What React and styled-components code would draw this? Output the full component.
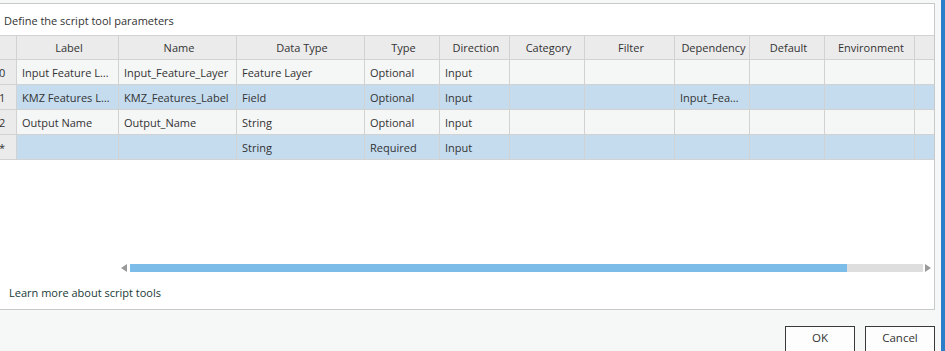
import React from "react";
import styled, { createGlobalStyle } from "styled-components";

const Global = createGlobalStyle`
  html, body { margin: 0; padding: 0; }
  body {
    width: 945px; height: 351px; overflow: hidden;
    font-family: "Open Sans", "Noto Sans", "Liberation Sans", sans-serif;
    font-size: 11px; color: #333;
    background: #f6f7f7;
  }
`;

const Window = styled.div`
  display: flex;
  width: 945px;
  height: 351px;
  overflow: hidden;
  background: #f6f7f7;
`;

const Main = styled.div`
  flex: 1;
  display: flex;
  flex-direction: column;
  padding-top: 3px;
  min-width: 0;
`;

const Edge = styled.div`
  width: 4px;
  background: #2b7ec7;
`;

const Panel = styled.div`
  flex-shrink: 0;
  height: 305px;
  margin-left: -6px;
  margin-right: 6px;
  border: 1px solid #c9c9c9;
  background: #fff;
  display: flex;
  flex-direction: column;
`;

const Title = styled.div`
  height: 31px;
  line-height: 33px;
  padding-left: 9px;
  white-space: nowrap;
`;

const Grid = styled.div`
  display: grid;
  grid-template-columns: 22px 102px 118px 128px 75px 70px 75px 90px 75px 75px 90px 1fr;
  border-top: 1px solid #d2d2d2;
`;

const Cell = styled.div`
  height: ${(p) => (p.$head ? 23 : 24)}px;
  line-height: ${(p) => (p.$head ? 23 : 25)}px;
  border-bottom: 1px solid #d2d2d2;
  border-right: ${(p) => (p.$last ? "none" : "1px solid #d2d2d2")};
  background: ${(p) =>
    p.$head || p.$rowhead ? "#ebebeb" : p.$sel ? "#c5dcef" : "#f5f6f6"};
  text-align: ${(p) => (p.$head ? "center" : "left")};
  padding-left: ${(p) => (p.$rowhead ? 4 : 5)}px;
  padding-right: ${(p) => (p.$head ? 2 : 7)}px;
  white-space: nowrap;
  overflow: hidden;
  text-overflow: ellipsis;
`;

const Spacer = styled.div`
  flex: 1;
`;

const ScrollBar = styled.div`
  display: flex;
  align-items: center;
  height: 8px;
  margin-left: 126px;
  margin-right: 3px;
  gap: 2px;
`;

const Arrow = styled.div`
  width: 0;
  height: 0;
  border-top: 4px solid transparent;
  border-bottom: 4px solid transparent;
  ${(p) =>
    p.$dir === "left"
      ? "border-right: 6px solid #9a9a9a; margin-right: 1px;"
      : "border-left: 6px solid #9a9a9a;"}
`;

const Track = styled.div`
  flex: 1;
  height: 8px;
  background: #dedede;
  display: flex;
`;

const Thumb = styled.div`
  height: 100%;
  background: #7bbde8;
`;

const Link = styled.div`
  height: 37px;
  box-sizing: border-box;
  padding-top: 4px;
  line-height: 33px;
  padding-left: 14px;
  color: #203a36;
`;

const Footer = styled.div`
  display: flex;
  justify-content: flex-end;
  gap: 10px;
  padding-top: 16px;
  padding-right: 6px;
`;

const Button = styled.button`
  flex-shrink: 0;
  width: 70px;
  height: 28px;
  border: 1px solid #3a3a3a;
  background: #fdfdfd;
  font-family: inherit;
  font-size: 11.5px;
  color: #333;
  padding: 0 0 5px;
`;

const cols = [
  "",
  "Label",
  "Name",
  "Data Type",
  "Type",
  "Direction",
  "Category",
  "Filter",
  "Dependency",
  "Default",
  "Environment",
  "",
];

const rows = [
  ["0", "Input Feature Layer", "Input_Feature_Layer", "Feature Layer", "Optional", "Input", "", "", "", "", "", ""],
  ["1", "KMZ Features Label", "KMZ_Features_Label", "Field", "Optional", "Input", "", "", "Input_Feature_Layer", "", "", ""],
  ["2", "Output Name", "Output_Name", "String", "Optional", "Input", "", "", "", "", "", ""],
  ["*", "", "", "String", "Required", "Input", "", "", "", "", "", ""],
];

export default function App() {
  return (
    <Window>
      <Global />
      <Main>
        <Panel>
          <Title>Define the script tool parameters</Title>
          <Grid>
            {cols.map((c, i) => (
              <Cell key={"h" + i} $head $last={i === cols.length - 1}>
                {c}
              </Cell>
            ))}
            {rows.map((r, ri) =>
              r.map((v, ci) => (
                <Cell
                  key={ri + "-" + ci}
                  $rowhead={ci === 0}
                  $sel={ri % 2 === 1}
                  $last={ci === r.length - 1}
                >
                  {v}
                </Cell>
              ))
            )}
          </Grid>
          <Spacer />
          <ScrollBar>
            <Arrow $dir="left" />
            <Track>
              <Thumb style={{ width: `${(715 / 791) * 100}%` }} />
            </Track>
            <Arrow $dir="right" />
          </ScrollBar>
          <Link>Learn more about script tools</Link>
        </Panel>
        <Footer>
          <Button>OK</Button>
          <Button>Cancel</Button>
        </Footer>
      </Main>
      <Edge />
    </Window>
  );
}
